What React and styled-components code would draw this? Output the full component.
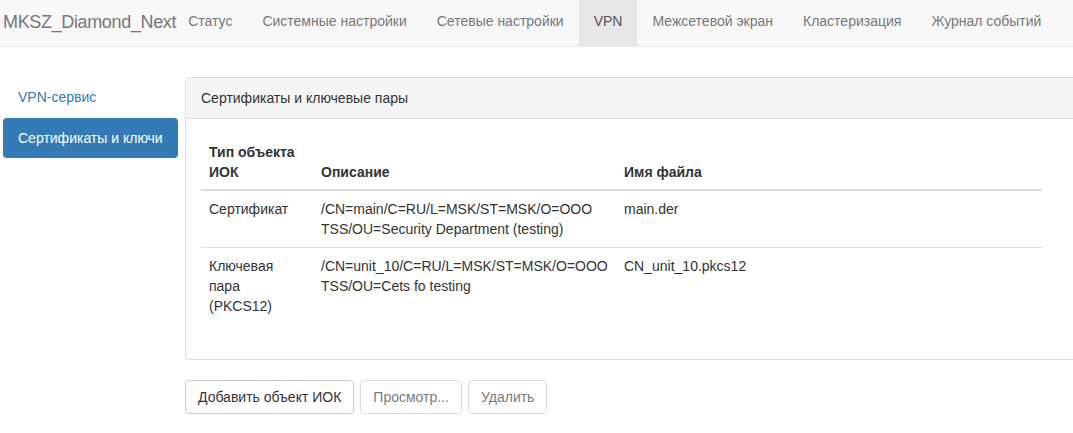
import React from "react";
import styled, { createGlobalStyle } from "styled-components";

const Global = createGlobalStyle`
  html, body { margin: 0; padding: 0; background: #fff; overflow: hidden; }
  body {
    font-family: "Liberation Sans", Arial, sans-serif;
    font-size: 14px;
    line-height: 20px;
    color: #333;
  }
  * { box-sizing: border-box; }
`;

const Navbar = styled.nav`
  display: flex;
  align-items: stretch;
  height: 47px;
  background: #f8f8f8;
  border-bottom: 1px solid #e7e7e7;
  white-space: nowrap;
  overflow: hidden;
`;

const Brand = styled.a`
  display: flex;
  align-items: center;
  padding: 0 0 3px 3px;
  font-size: 18px;
  letter-spacing: -0.35px;
  color: #777;
  text-decoration: none;
  margin-right: -3px;
`;

const NavItem = styled.a`
  display: flex;
  align-items: center;
  padding: 0 15px 5px;
  color: ${(p) => (p.$active ? "#555" : "#777")};
  background: ${(p) => (p.$active ? "#e7e7e7" : "transparent")};
  text-decoration: none;
`;

const Main = styled.div`
  display: flex;
  align-items: flex-start;
  gap: 7px;
  padding: 30px 0 0 3px;
  width: 100%;
  overflow: hidden;
`;

const Sidebar = styled.ul`
  list-style: none;
  margin: 0;
  padding: 0;
  width: 175px;
  flex-shrink: 0;
  display: flex;
  flex-direction: column;
  gap: 1px;
`;

const Pill = styled.li`
  padding: 10px 15px;
  border-radius: 4px;
  color: ${(p) => (p.$active ? "#fff" : "#337ab7")};
  background: ${(p) => (p.$active ? "#337ab7" : "transparent")};
`;

const Content = styled.div`
  display: flex;
  flex-direction: column;
  gap: 20px;
  flex-shrink: 0;
`;

const Panel = styled.section`
  width: 900px;
  border: 1px solid #ddd;
  border-radius: 4px;
  background: #fff;
`;

const PanelHeading = styled.div`
  padding: 10px 15px;
  background: #f5f5f5;
  border-bottom: 1px solid #ddd;
  border-radius: 3px 3px 0 0;
`;

const PanelBody = styled.div`
  padding: 15px 15px 35px;
`;

const Table = styled.table`
  width: 841px;
  border-collapse: collapse;
  border-spacing: 0;
  table-layout: fixed;
`;

const Th = styled.th`
  text-align: left;
  vertical-align: bottom;
  padding: 8px 8px 7px;
  font-weight: bold;
  border-bottom: 2px solid #ddd;
  width: ${(p) => p.$w}px;
`;

const Td = styled.td`
  vertical-align: top;
  padding: 8px;
  border-top: ${(p) => (p.$first ? "none" : "1px solid #ddd")};
`;

const Buttons = styled.div`
  display: flex;
  gap: 6px;
`;

const Button = styled.button`
  font-family: inherit;
  font-size: 14px;
  line-height: 20px;
  padding: 6px 12px;
  color: #333;
  background: #fff;
  border: 1px solid #ccc;
  border-radius: 4px;
  opacity: ${(p) => (p.disabled ? 0.65 : 1)};
  cursor: ${(p) => (p.disabled ? "not-allowed" : "pointer")};
`;

const navItems = [
  "Статус",
  "Системные настройки",
  "Сетевые настройки",
  "VPN",
  "Межсетевой экран",
  "Кластеризация",
  "Журнал событий",
];

const rows = [
  {
    type: "Сертификат",
    desc: ["/CN=main/C=RU/L=MSK/ST=MSK/O=OOO", "TSS/OU=Security Department (testing)"],
    file: "main.der",
  },
  {
    type: ["Ключевая", "пара", "(PKCS12)"],
    desc: ["/CN=unit_10/C=RU/L=MSK/ST=MSK/O=OOO", "TSS/OU=Cets fo testing"],
    file: "CN_unit_10.pkcs12",
  },
];

const lines = (v) =>
  Array.isArray(v)
    ? v.map((l, i) => (
        <React.Fragment key={i}>
          {i > 0 && <br />}
          {l}
        </React.Fragment>
      ))
    : v;

export default function App() {
  return (
    <>
      <Global />
      <Navbar>
        <Brand>MKSZ_Diamond_Next</Brand>
        {navItems.map((n) => (
          <NavItem key={n} $active={n === "VPN"}>
            {n}
          </NavItem>
        ))}
      </Navbar>
      <Main>
        <Sidebar>
          <Pill>VPN-сервис</Pill>
          <Pill $active>Сертификаты и ключи</Pill>
        </Sidebar>
        <Content>
          <Panel>
            <PanelHeading>Сертификаты и ключевые пары</PanelHeading>
            <PanelBody>
              <Table>
                <thead>
                  <tr>
                    <Th $w={112}>
                      Тип объекта
                      <br />
                      ИОК
                    </Th>
                    <Th $w={303}>Описание</Th>
                    <Th $w={426}>Имя файла</Th>
                  </tr>
                </thead>
                <tbody>
                  {rows.map((r, i) => (
                    <tr key={i}>
                      <Td $first={i === 0}>{lines(r.type)}</Td>
                      <Td $first={i === 0}>{lines(r.desc)}</Td>
                      <Td $first={i === 0}>{r.file}</Td>
                    </tr>
                  ))}
                </tbody>
              </Table>
            </PanelBody>
          </Panel>
          <Buttons>
            <Button>Добавить объект ИОК</Button>
            <Button disabled>Просмотр...</Button>
            <Button disabled>Удалить</Button>
          </Buttons>
        </Content>
      </Main>
    </>
  );
}
